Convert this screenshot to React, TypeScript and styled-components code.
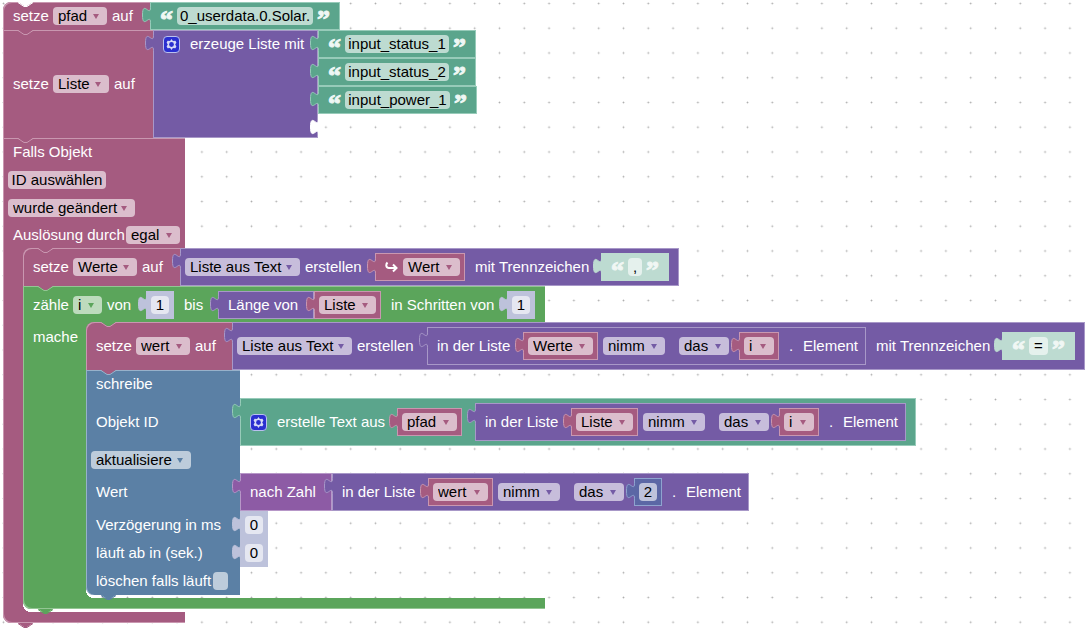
import React from 'react';
import styled, { createGlobalStyle, css } from 'styled-components';

const GlobalStyle = createGlobalStyle`
  * { box-sizing: border-box; }
  body {
    margin: 0;
    background: #fff;
    font: 15px/18px "Liberation Sans", Arial, sans-serif;
  }
`;

type Tone = 'variable' | 'list' | 'text' | 'loop' | 'system' | 'convert' | 'math' | 'number' | 'literal';

const tones: Record<Tone, { fill: string; edge: string }> = {
  variable: { fill: '#a55b80', edge: '#c997b0' },
  list: { fill: '#745ba5', edge: '#a898c8' },
  text: { fill: '#5ba58c', edge: '#97cbb9' },
  loop: { fill: '#5ba55b', edge: '#93c693' },
  system: { fill: '#5b80a5', edge: '#97b1ca' },
  convert: { fill: '#8d5ba5', edge: '#b797c8' },
  math: { fill: '#5b67a5', edge: '#8fa3cf' },
  number: { fill: '#bdc2db', edge: '#bdc2db' },
  literal: { fill: '#bddbd1', edge: '#bddbd1' },
};

const toned = css<{ $tone: Tone }>`
  --fill: ${(p) => tones[p.$tone].fill};
  --edge: ${(p) => tones[p.$tone].edge};
`;

const Workspace = styled.main`
  display: grid;
  min-height: 100vh;
  overflow: hidden;
`;

const Grid = styled.svg`
  grid-area: 1 / 1;
  width: 100%;
  height: 100%;
`;

const Program = styled.div`
  grid-area: 1 / 1;
  padding: 2px 3px;
`;

const Stack = styled.div`
  display: flex;
  flex-direction: column;
  align-items: flex-start;
`;

const Statement = styled.section<{ $tone: Tone }>`
  ${toned}
  position: relative;
  display: flex;
  flex-direction: column;
  align-items: flex-start;
  isolation: isolate;
`;

const Row = styled.div`
  display: flex;
  align-items: stretch;
`;

const Cell = styled.div<{ $w: number; $h: number; $top?: boolean; $round?: 'top' | 'bottom' }>`
  display: flex;
  align-items: center;
  gap: 5px;
  width: ${(p) => p.$w}px;
  min-height: ${(p) => p.$h}px;
  padding: 0 5px;
  background: var(--fill);
  box-shadow: inset 1px ${(p) => (p.$top ? 1 : 0)}px var(--edge);
  border-top-left-radius: ${(p) => (p.$round === 'top' ? 8 : 0)}px;
  border-bottom-left-radius: ${(p) => (p.$round === 'bottom' ? 8 : 0)}px;
`;

const LoopHead = styled(Cell)`
  padding-top: 2px;
`;

const Mouth = styled.div<{ $rail: number }>`
  display: grid;
  grid-template-columns: ${(p) => p.$rail}px auto;
`;

const Rail = styled.div`
  padding: 6px 0 0 10px;
  color: #fff;
  background: var(--fill);
  box-shadow: inset 1px 0 var(--edge);
`;

const MouthBody = styled.div`
  padding-bottom: 3px;
  background:
    linear-gradient(var(--fill), var(--fill)) left top / 8px 8px no-repeat,
    radial-gradient(circle at 100% 0, transparent 8px, var(--fill) 8px) left bottom / 8px 8px no-repeat;
`;

const Foot = styled.div<{ $w: number }>`
  width: ${(p) => p.$w}px;
  height: 11px;
  background: var(--fill);
  border-bottom-left-radius: 8px;
  box-shadow: inset 1px -1px var(--edge);
`;

const Value = styled.div<{ $tone: Tone; $h?: number; $w?: number; $before?: number; $after?: number }>`
  ${toned}
  position: relative;
  display: flex;
  flex: none;
  align-items: center;
  gap: 5px;
  width: ${(p) => (p.$w ? `${p.$w}px` : 'auto')};
  height: ${(p) => p.$h ?? 28}px;
  padding: 0 5px;
  margin-left: ${(p) => p.$before ?? 0}px;
  margin-right: ${(p) => p.$after ?? 0}px;
  background: var(--fill);
  box-shadow: inset 0 0 0 1px var(--edge);
`;

const ListBlock = styled(Value)`
  height: auto;
  align-items: flex-start;
`;

const ListHead = styled.div`
  display: flex;
  align-items: center;
  gap: 5px;
  height: 28px;
`;

const Items = styled.div`
  position: relative;
  display: flex;
  flex-direction: column;
  align-items: flex-start;
`;

const EmptySlot = styled.div`
  position: relative;
  height: 24px;
`;

const TabShape = styled.svg`
  position: absolute;
  left: -8px;
  top: 5px;
  width: 10px;
  height: 16px;
`;

const NotchShape = styled.svg<{ $bottom?: boolean }>`
  position: absolute;
  z-index: 1;
  left: 15px;
  ${(p) => (p.$bottom ? 'bottom: -5px;' : 'top: 0;')}
  width: 15px;
  height: 5px;
`;

const field = css`
  height: 18px;
  border: 0;
  border-radius: 4px;
  color: #000;
  background: rgba(255, 255, 255, 0.6);
  font: inherit;
`;

const Picker = styled.span<{ $w: number; $lead?: boolean }>`
  position: relative;
  display: flex;
  flex: none;
  width: ${(p) => p.$w}px;
  margin-left: ${(p) => (p.$lead ? 9 : 0)}px;
`;

const Select = styled.select`
  ${field}
  width: 100%;
  padding: 0 0 0 5px;
  appearance: none;
`;

const Arrow = styled.svg`
  position: absolute;
  right: 8px;
  top: 7px;
  width: 6px;
  height: 5px;
  fill: var(--fill);
  pointer-events: none;
`;

const Input = styled.input<{ $w: number }>`
  ${field}
  flex: none;
  width: ${(p) => p.$w}px;
  padding: 0;
  text-align: center;
`;

const Quoted = styled.div`
  display: flex;
  align-items: center;
  gap: 4px;
  padding: 0 5px;
`;

const Quote = styled.span<{ $faint?: boolean }>`
  width: 13px;
  height: 18px;
  color: ${(p) => (p.$faint ? '#f0f7f4' : '#eef7f4')};
  font: bold 26px/25px "Liberation Serif", serif;
  -webkit-text-stroke: 1px currentColor;
`;

const PickButton = styled.button`
  ${field}
  width: 98px;
  padding: 0;
`;

const GearButton = styled.button`
  display: flex;
  flex: none;
  width: 17px;
  height: 17px;
  margin-left: 5px;
  padding: 0;
  border: 0;
  background: none;
`;

const Label = styled.label<{ $w: number }>`
  flex: none;
  width: ${(p) => p.$w}px;
  color: #fff;
  white-space: nowrap;
  &:first-child,
  ${TabShape} + &,
  ${GearButton} + & { margin-left: 5px; }
  &:last-child { margin-right: 5px; }
`;

const Wrap = styled.svg`
  flex: none;
  width: 13px;
  height: 12px;
  margin-left: 5px;
`;

const Check = styled.input`
  flex: none;
  width: 15px;
  height: 18px;
  margin: 0;
  appearance: none;
  border-radius: 4px;
  background: rgba(255, 255, 255, 0.6);
`;

const Tab = ({ empty }: { empty?: boolean }) => (
  <TabShape viewBox="0 0 10 16" aria-hidden="true">
    <path
      d="M10 15.5H8.5C8.5 5.5 .5 23.5 .5 8S8.5 10.5 8.5 .5H10Z"
      fill={empty ? '#fff' : 'var(--fill)'}
    />
    <path
      d="M8.5 15.5C8.5 5.5 .5 23.5 .5 8S8.5 10.5 8.5 .5"
      fill="none"
      stroke={empty ? '#fff' : 'var(--edge)'}
    />
  </TabShape>
);

const Notch = ({ above, bottom }: { above: Tone | 'page'; bottom?: boolean }) => (
  <NotchShape $bottom={bottom} viewBox="0 0 15 5" aria-hidden="true">
    <path d="M0 0L6 4H9L15 0Z" fill={above === 'page' ? '#fff' : tones[above].fill} />
    <path
      d="M0 .5L6 4.5H9L15 .5"
      fill="none"
      stroke={above === 'page' ? '#fff' : bottom ? tones[above].fill : 'var(--edge)'}
    />
  </NotchShape>
);

const Dropdown = ({ value, w, name, lead }: { value: string; w: number; name: string; lead?: boolean }) => (
  <Picker $w={w} $lead={lead}>
    <Select aria-label={name} defaultValue={value}>
      <option>{value}</option>
    </Select>
    <Arrow viewBox="0 0 6 5" aria-hidden="true">
      <path d="M0 0h6L3 5z" />
    </Arrow>
  </Picker>
);

const Gear = () => (
  <GearButton aria-label="Block anpassen">
    <svg width="17" height="17" viewBox="0 0 17 17" aria-hidden="true">
      <rect x=".5" y=".5" width="16" height="16" rx="3.5" fill="#2a2fd0" stroke="#b9c0ee" />
      <path
        d="M8.5 3l1.4 2 2.5-.2 1 1.8-1.2 1.9 1.2 1.9-1 1.8-2.5-.2-1.4 2-1.4-2-2.5.2-1-1.8 1.2-1.9-1.2-1.9 1-1.8 2.5.2z"
        fill="#d5d9f6"
      />
      <circle cx="8.5" cy="8.5" r="2.4" fill="#2a2fd0" />
    </svg>
  </GearButton>
);

type Placement = { before?: number; after?: number };

const VariableValue = ({ name, w, before = 10, after = 5 }: { name: string; w: number } & Placement) => (
  <Value $tone="variable" $before={before} $after={after}>
    <Tab />
    <Dropdown name="Variable" value={name} w={w} />
  </Value>
);

const TextValue = ({ text, w, literal, before, after }: { text: string; w: number; literal?: boolean } & Placement) => (
  <Value $tone={literal ? 'literal' : 'text'} $before={before} $after={after}>
    <Tab />
    <Quoted>
      <Quote $faint={literal}>“</Quote>
      <Input aria-label="Text" $w={w} defaultValue={text} />
      <Quote $faint={literal}>”</Quote>
    </Quoted>
  </Value>
);

const NumberValue = ({
  value,
  id,
  tone = 'number',
  before = 10,
  after = 5,
}: { value: string; id?: string; tone?: Tone } & Placement) => (
  <Value $tone={tone} $before={before} $after={after}>
    <Tab />
    <Input id={id} aria-label={id ? undefined : 'Zahl'} $w={18} defaultValue={value} />
  </Value>
);

const ElementOf = ({
  list,
  w,
  index,
  before,
  after,
}: { list: string; w: number; index: React.ReactNode } & Placement) => (
  <Value $tone="list" $h={38} $before={before} $after={after}>
    <Tab />
    <Label as="span" $w={71}>in der Liste</Label>
    <VariableValue name={list} w={w} after={0} />
    <Dropdown name="Aktion" value="nimm" w={62} />
    <Dropdown name="Position" value="das" w={50} lead />
    {index}
    <Label as="span" $w={9}>.</Label>
    <Label as="span" $w={53}>Element</Label>
  </Value>
);

const SetVariable = ({
  name,
  w,
  cell,
  h,
  first,
}: { name: string; w: number; cell: number; h: number; first?: boolean }) => (
  <Cell $w={cell} $h={h} $top $round={first ? 'top' : undefined}>
    <Label as="span" $w={35}>setze</Label>
    <Dropdown name="Variable" value={name} w={w} />
    <Label as="span" $w={22}>auf</Label>
  </Cell>
);

const App = () => (
  <>
    <GlobalStyle />
    <Workspace>
      <Grid aria-hidden="true">
        <defs>
          <pattern id="dots" width="24.8" height="24.75" patternUnits="userSpaceOnUse">
            <rect x="2" y="3" width="3" height="1" fill="#e2e2e2" />
            <rect x="3" y="2" width="1" height="3" fill="#e2e2e2" />
            <rect x="3" y="3" width="1" height="1" fill="#a8a8a8" />
          </pattern>
        </defs>
        <rect width="100%" height="100%" fill="url(#dots)" />
      </Grid>
      <Program>
        <Stack>
          <Statement $tone="variable">
            <Notch above="page" />
            <Row>
              <SetVariable name="pfad" w={54} cell={147} h={28} first />
              <TextValue text="0_userdata.0.Solar." w={136} />
            </Row>
          </Statement>

          <Statement $tone="variable">
            <Notch above="variable" />
            <Row>
              <SetVariable name="Liste" w={56} cell={150} h={108} />
              <ListBlock $tone="list" $w={165}>
                <Tab />
                <ListHead>
                  <Gear />
                  <Label as="span" $w={112}>erzeuge Liste mit</Label>
                </ListHead>
              </ListBlock>
              <Items>
                <TextValue text="input_status_1" w={104} />
                <TextValue text="input_status_2" w={104} />
                <TextValue text="input_power_1" w={105} />
                <EmptySlot>
                  <Tab empty />
                </EmptySlot>
              </Items>
            </Row>
          </Statement>

          <Statement $tone="variable">
            <Notch above="variable" />
            <Cell $w={182} $h={28} $top>
              <Label as="span" $w={80}>Falls Objekt</Label>
            </Cell>
            <Cell $w={182} $h={28}>
              <PickButton>ID auswählen</PickButton>
            </Cell>
            <Cell $w={182} $h={28}>
              <Dropdown name="Bedingung" value="wurde geändert" w={127} />
            </Cell>
            <Cell $w={182} $h={26}>
              <Label as="span" $w={108}>Auslösung durch</Label>
              <Dropdown name="Auslösung durch" value="egal" w={54} />
            </Cell>
            <Mouth $rail={20}>
              <Rail />
              <MouthBody>
                <Stack>
                  <Statement $tone="variable">
                    <Notch above="variable" />
                    <Row>
                      <SetVariable name="Werte" w={64} cell={157} h={38} first />
                      <Value $tone="list" $h={38}>
                        <Tab />
                        <Dropdown name="Umwandlung" value="Liste aus Text" w={115} />
                        <Label as="span" $w={55}>erstellen</Label>
                        <Value $tone="variable" $before={10} $after={5}>
                          <Tab />
                          <Wrap viewBox="0 0 13 12" aria-hidden="true">
                            <path
                              d="M2.5 1.5C.5 3.5 1 7 4 7H11M8 3.5L11.5 7 8 10.5"
                              fill="none"
                              stroke="#fff"
                              strokeWidth="2"
                            />
                          </Wrap>
                          <Dropdown name="Objektwert" value="Wert" w={57} />
                        </Value>
                        <Label as="span" $w={111}>mit Trennzeichen</Label>
                        <TextValue literal text="," w={14} before={10} after={5} />
                      </Value>
                    </Row>
                  </Statement>

                  <Statement $tone="loop">
                    <Notch above="variable" />
                    <LoopHead $w={522} $h={36} $top>
                      <Label as="span" $w={35}>zähle</Label>
                      <Dropdown name="Zählvariable" value="i" w={29} />
                      <Label as="span" $w={24}>von</Label>
                      <NumberValue value="1" />
                      <Label as="span" $w={19}>bis</Label>
                      <Value $tone="list" $w={96} $before={10}>
                        <Tab />
                        <Label as="span" $w={70}>Länge von</Label>
                      </Value>
                      <VariableValue name="Liste" w={57} before={-5} />
                      <Label as="span" $w={101}>in Schritten von</Label>
                      <NumberValue value="1" />
                    </LoopHead>
                    <Mouth $rail={63}>
                      <Rail>mache</Rail>
                      <MouthBody>
                        <Stack>
                          <Statement $tone="variable">
                            <Notch above="loop" />
                            <Row>
                              <SetVariable name="wert" w={54} cell={146} h={48} first />
                              <Value $tone="list" $h={48}>
                                <Tab />
                                <Dropdown name="Umwandlung" value="Liste aus Text" w={115} />
                                <Label as="span" $w={55}>erstellen</Label>
                                <ElementOf
                                  list="Werte"
                                  w={65}
                                  before={10}
                                  after={5}
                                  index={<VariableValue name="i" w={30} before={5} />}
                                />
                                <Label as="span" $w={111}>mit Trennzeichen</Label>
                                <TextValue literal text="=" w={19} before={10} after={5} />
                              </Value>
                            </Row>
                          </Statement>

                          <Statement $tone="system">
                            <Notch above="variable" />
                            <Cell $w={154} $h={28} $top>
                              <Label as="span" $w={56}>schreibe</Label>
                            </Cell>
                            <Row>
                              <Cell $w={154} $h={48}>
                                <Label as="span" $w={62}>Objekt ID</Label>
                              </Cell>
                              <Value $tone="text" $h={48}>
                                <Tab />
                                <Gear />
                                <Label as="span" $w={105}>erstelle Text aus</Label>
                                <VariableValue name="pfad" w={55} after={0} />
                                <ElementOf
                                  list="Liste"
                                  w={57}
                                  before={8}
                                  after={5}
                                  index={<VariableValue name="i" w={30} before={5} />}
                                />
                              </Value>
                            </Row>
                            <Cell $w={154} $h={27}>
                              <Dropdown name="Art" value="aktualisiere" w={100} />
                            </Cell>
                            <Row>
                              <Cell $w={154} $h={38}>
                                <Label as="span" $w={32}>Wert</Label>
                              </Cell>
                              <Value $tone="convert" $w={92} $h={38}>
                                <Tab />
                                <Label as="span" $w={66}>nach Zahl</Label>
                              </Value>
                              <ElementOf
                                list="wert"
                                w={55}
                                index={<NumberValue tone="math" value="2" before={5} />}
                              />
                            </Row>
                            <Row>
                              <Cell $w={154} $h={28}>
                                <Label htmlFor="delay" $w={122}>Verzögerung in ms</Label>
                              </Cell>
                              <NumberValue id="delay" value="0" before={0} after={0} />
                            </Row>
                            <Row>
                              <Cell $w={154} $h={28}>
                                <Label htmlFor="expire" $w={105}>läuft ab in (sek.)</Label>
                              </Cell>
                              <NumberValue id="expire" value="0" before={0} after={0} />
                            </Row>
                            <Cell $w={154} $h={28} $round="bottom">
                              <Label htmlFor="clear" $w={112}>löschen falls läuft</Label>
                              <Check id="clear" type="checkbox" />
                            </Cell>
                            <Notch above="system" bottom />
                          </Statement>
                        </Stack>
                      </MouthBody>
                    </Mouth>
                    <Foot $w={522} />
                    <Notch above="loop" bottom />
                  </Statement>
                </Stack>
              </MouthBody>
            </Mouth>
            <Foot $w={182} />
            <Notch above="variable" bottom />
          </Statement>
        </Stack>
      </Program>
    </Workspace>
  </>
);

export default App;
